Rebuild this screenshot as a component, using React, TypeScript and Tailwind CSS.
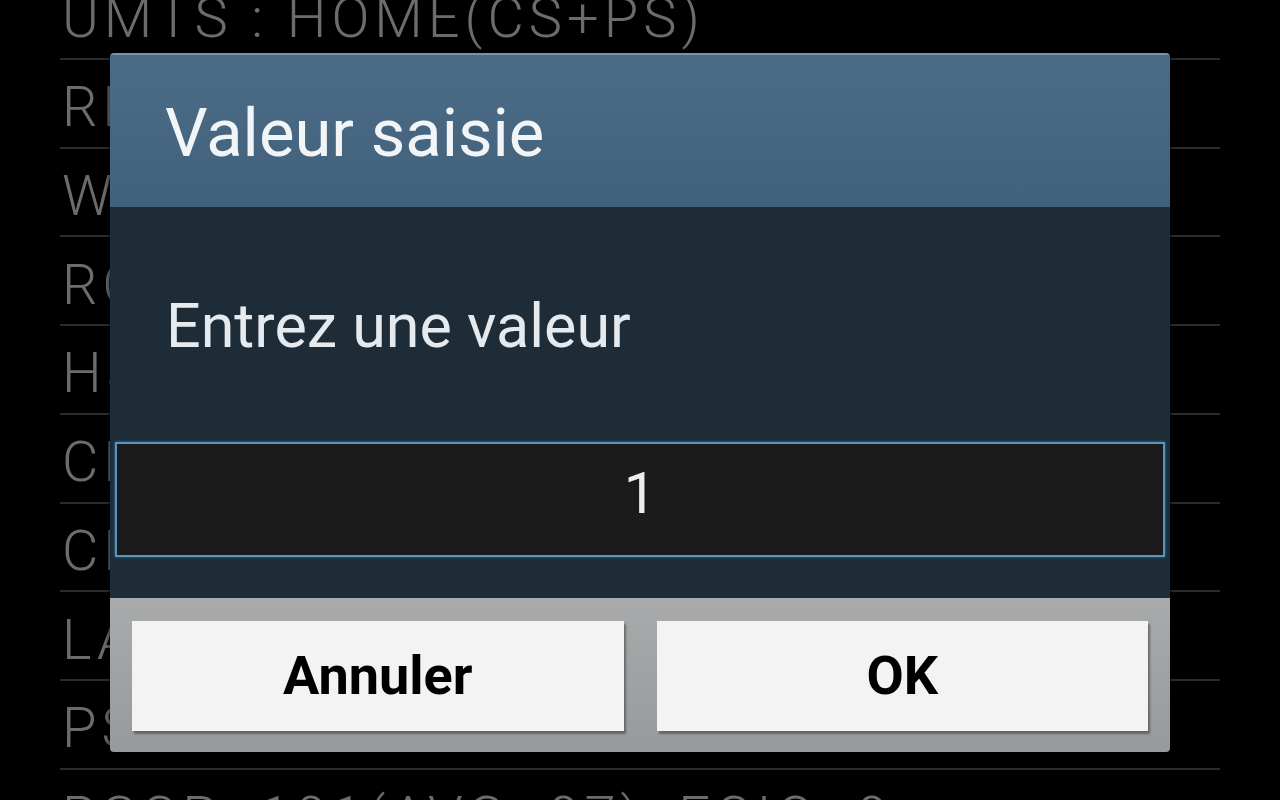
import React from "react";

const rows = [
  "UMTS : HOME(CS+PS)",
  "RRC : CELL_DCH",
  "WCDMA BAND : 1",
  "ROAMING : NO",
  "HSDPA : ON, HSUPA : ON",
  "CELL ID : 1234567",
  "CHANNEL : 10713",
  "LAC : 1234",
  "PSC : 312",
  "RSCP:-101(AVG:-97), ECIO:-9",
];

export default function App() {
  return (
    <div className="relative w-[1280px] h-[800px] overflow-hidden bg-black font-['Roboto',sans-serif]">
      {/* service-mode list behind the dialog */}
      <div className="-mt-[29px] px-[60px]">
        {rows.map((r, i) => (
          <div
            key={i}
            className="h-[88.75px] border-b-2 border-[#2c2c2c] flex items-center pl-[2px] pt-[8px] text-[56px] font-light tracking-[5px] text-[#6c6c6c] whitespace-nowrap leading-none"
          >
            {r}
          </div>
        ))}
      </div>

      {/* input dialog */}
      <div className="absolute left-[110px] top-[53px] w-[1060px] h-[699px] rounded-[4px] overflow-hidden flex flex-col shadow-[0_0_6px_rgba(0,0,0,0.8)]">
        <div className="h-[154px] shrink-0 bg-gradient-to-b from-[#4b6c87] to-[#42617b] border-t-2 border-[#7893a8] flex items-center pl-[55px] pt-[4px]">
          <span className="text-[67px] text-[#f2f5f7] leading-none">Valeur saisie</span>
        </div>
        <div className="h-[391px] shrink-0 bg-[#1e2c38] flex flex-col">
          <div className="h-[235px] flex items-center pl-[56px] pt-[4px]">
            <span className="text-[61px] text-[#e4eaee] leading-none">Entrez une valeur</span>
          </div>
          <div className="mx-[5px] h-[115px] border-2 border-[#5597bf] bg-[#1b1b1b] flex items-center justify-center pb-[14px] shadow-[0_0_3px_rgba(85,151,191,0.6)]">
            <span className="text-[58px] text-[#eeeeee] leading-none">1</span>
          </div>
        </div>
        <div className="flex-1 bg-gradient-to-b from-[#a8aaab] to-[#97999a] flex gap-[33px] px-[22px] pt-[23px] pb-[21px]">
          <button className="flex-1 bg-[#f3f3f3] shadow-[2px_3px_2px_rgba(0,0,0,0.35)] flex items-center justify-center">
            <span className="text-[54px] font-bold text-black leading-none">Annuler</span>
          </button>
          <button className="flex-1 bg-[#f3f3f3] shadow-[2px_3px_2px_rgba(0,0,0,0.35)] flex items-center justify-center">
            <span className="text-[54px] font-bold text-black leading-none">OK</span>
          </button>
        </div>
      </div>
    </div>
  );
}
